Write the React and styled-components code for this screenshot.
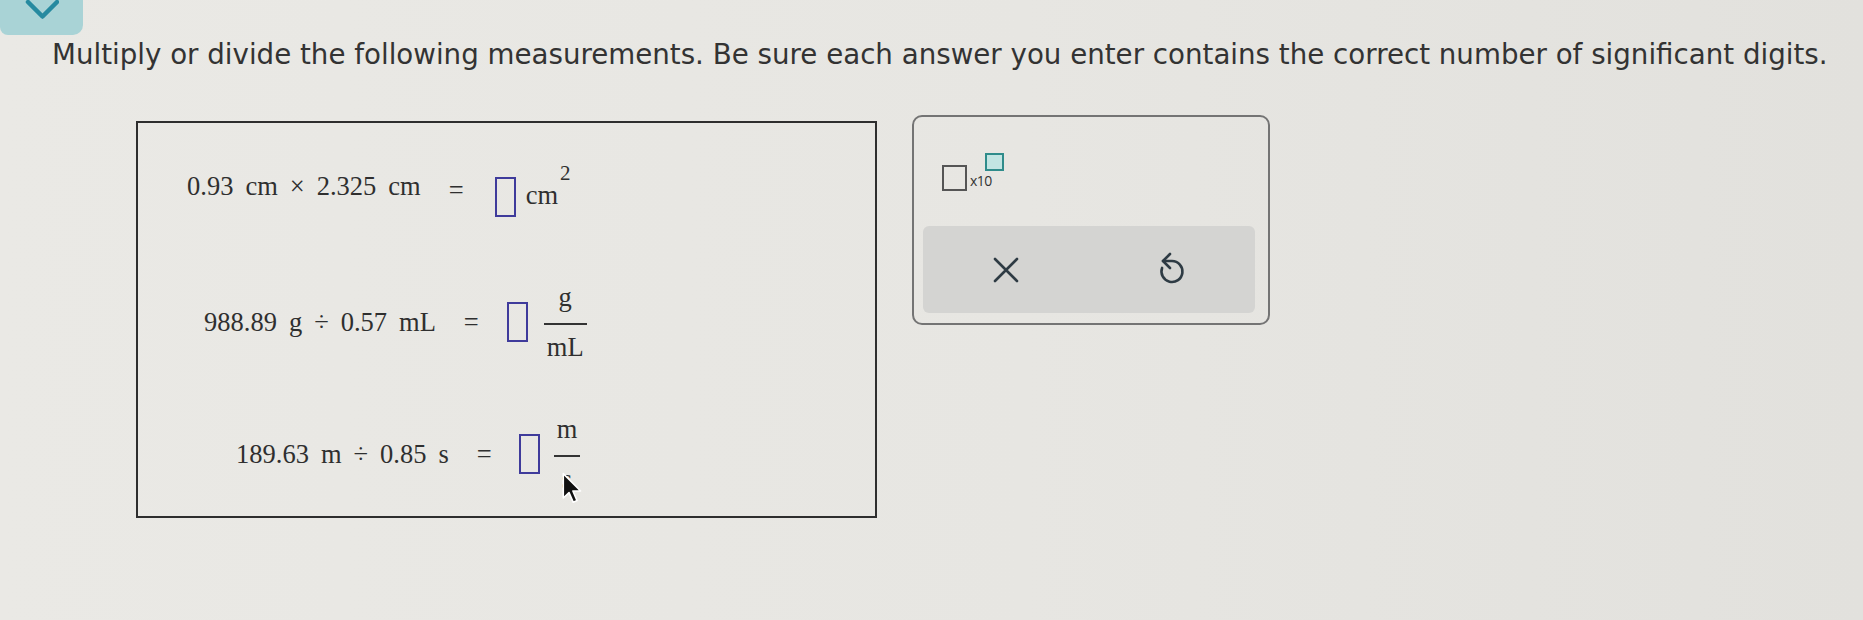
import React from 'react';
import styled, { createGlobalStyle } from 'styled-components';

const GlobalStyle = createGlobalStyle`
  html, body {
    margin:0;
    padding:0;
  }
  body {
    width:1863px;
    height:620px;
    overflow:hidden;
    background:#e7e6e2;
  }
`

const Page = styled.div`
  width:1863px;
  height:620px;
  background:linear-gradient(90deg,#eae9e5 0%,#e7e6e2 55%,#e2e1dd 100%);
  font-family:"DejaVu Sans", "Open Sans", sans-serif;
`
const CollapseTab = styled.div`
  width:83px;
  height:35px;
  background:#a9d3d6;
  border-radius:0 0 10px 8px;
  display:flex;
  justify-content:center;
`
const Prompt = styled.p`
  margin:5px 0 0 52px;
  font-size:27.7px;
  line-height:30px;
  color:#333;
  white-space:nowrap;
`
const Workspace = styled.div`
  display:flex;
  align-items:flex-start;
  margin-top:45px;
`

/* question box with the three measurements */
const QuestionBox = styled.div`
  box-sizing:border-box;
  width:741px;
  height:397px;
  margin:6px 0 0 136px;
  padding-top:37px;
  border:2px solid #2e2e2e;
  display:flex;
  flex-direction:column;
  gap:72px;
  font-family:"Liberation Serif", "Times New Roman", serif;
  font-size:26.5px;
  color:#2f2f2f;
`
const Row = styled.div`
  height:60px;
  display:flex;
  align-items:center;
  padding-left:${p => p.$indent}px;
`
const Expr = styled.div`
  display:flex;
  gap:12px;
  line-height:26px;
  margin-bottom:${p => p.$raise || 0}px;
`
const Equals = styled.span`
  line-height:26px;
  margin:0 ${p => p.$after || 28}px 0 28px;
`
const Answer = styled.div`
  display:flex;
  align-items:${p => p.$bottom ? 'flex-end' : 'center'};
  gap:${p => p.$gap}px;
`
const AnswerBox = styled.span`
  box-sizing:border-box;
  width:21px;
  height:40px;
  border:2px solid #3f3b9b;
`
const Unit = styled.span`
  display:flex;
  align-items:flex-start;
  margin-bottom:9px;
`
const UnitText = styled.span`
  line-height:26px;
  margin-top:19px;
`
const Sup = styled.span`
  font-size:21px;
  line-height:21px;
  margin-left:2px;
`
const Fraction = styled.span`
  position:relative;
  display:inline-flex;
  flex-direction:column;
  align-items:center;
`
const Num = styled.span`
  line-height:26px;
  margin-bottom:13px;
  padding:0 3px;
`
const Bar = styled.span`
  align-self:stretch;
  height:2px;
  background:#333;
`
const Den = styled.span`
  line-height:26px;
  margin-top:9px;
  padding:0 3px;
`
const Pointer = styled.svg`
  position:absolute;
  left:8px;
  top:56px;
`

/* answer tools panel */
const ToolPanel = styled.div`
  box-sizing:border-box;
  width:358px;
  height:210px;
  margin-left:35px;
  padding:36px 13px 10px 9px;
  border:2px solid #747474;
  border-radius:10px;
  display:flex;
  flex-direction:column;
`
const SciWidget = styled.div`
  height:38px;
  margin-left:19px;
  display:flex;
  align-items:flex-end;
`
const BaseBox = styled.span`
  box-sizing:border-box;
  width:25px;
  height:26px;
  border:2px solid #555;
`
const TimesTen = styled.span`
  font-family:"Open Sans", sans-serif;
  font-size:14px;
  line-height:14px;
  color:#333;
  margin:0 0 3px 3px;
  letter-spacing:-0.5px;
`
const ExpBox = styled.span`
  box-sizing:border-box;
  align-self:flex-start;
  width:19px;
  height:18px;
  margin-left:-7px;
  border:2px solid #2f8c8b;
  background:#c2e5e3;
`
const ActionBar = styled.div`
  margin-top:35px;
  height:87px;
  border-radius:6px;
  background:#d4d4d2;
  display:flex;
`
const ActionButton = styled.button`
  flex:1;
  border:none;
  background:transparent;
  padding:0;
  display:flex;
  align-items:center;
  justify-content:center;
`

const Chevron = () => (
  <svg width="34" height="22" viewBox="0 0 34 22">
    <path d="M3 2 L17.5 16.5 L32 2" fill="none" stroke="#268aa0" strokeWidth="4.5" strokeLinecap="round" strokeLinejoin="round" />
  </svg>
)

const CloseIcon = () => (
  <svg width="26" height="26" viewBox="0 0 26 26">
    <path d="M2 2 L24 24 M24 2 L2 24" stroke="#2e3b44" strokeWidth="2.6" strokeLinecap="round" />
  </svg>
)

const UndoIcon = () => (
  <svg width="45" height="45" viewBox="0 0 45 45">
    <path d="M20 7 L13 14 L20 21" fill="none" stroke="#2e3b44" strokeWidth="2.6" strokeLinecap="round" strokeLinejoin="round" />
    <path d="M13 14 H22 A10.5 10.5 0 1 1 12.1 20.9" fill="none" stroke="#2e3b44" strokeWidth="2.6" strokeLinecap="round" />
  </svg>
)

const MousePointer = () => (
  <Pointer width="20" height="32" viewBox="0 0 12.5 19.5">
    <path d="M0.8 0.8 L0.8 16 L4.4 12.6 L7 18.6 L9.4 17.6 L6.8 11.6 L11.6 11.6 Z" fill="#111" stroke="#fff" strokeWidth="1" strokeLinejoin="round" />
  </Pointer>
)

const App = () => (
  <Page>
    <GlobalStyle />
    <CollapseTab><Chevron /></CollapseTab>
    <Prompt>Multiply or divide the following measurements. Be sure each answer you enter contains the correct number of significant digits.</Prompt>
    <Workspace>
      <QuestionBox>
        <Row $indent={49}>
          <Expr $raise={8}>
            <span>0.93</span><span>cm</span><span>×</span><span>2.325</span><span>cm</span>
          </Expr>
          <Equals $after={31}>=</Equals>
          <Answer $bottom $gap={10}>
            <AnswerBox />
            <Unit><UnitText>cm</UnitText><Sup>2</Sup></Unit>
          </Answer>
        </Row>
        <Row $indent={66}>
          <Expr>
            <span>988.89</span><span>g</span><span>÷</span><span>0.57</span><span>mL</span>
          </Expr>
          <Equals>=</Equals>
          <Answer $gap={16}>
            <AnswerBox />
            <Fraction><Num>g</Num><Bar /><Den>mL</Den></Fraction>
          </Answer>
        </Row>
        <Row $indent={98}>
          <Expr>
            <span>189.63</span><span>m</span><span>÷</span><span>0.85</span><span>s</span>
          </Expr>
          <Equals $after={27}>=</Equals>
          <Answer $gap={14}>
            <AnswerBox />
            <Fraction>
              <Num>m</Num><Bar /><Den>s</Den>
              <MousePointer />
            </Fraction>
          </Answer>
        </Row>
      </QuestionBox>
      <ToolPanel>
        <SciWidget>
          <BaseBox />
          <TimesTen>x10</TimesTen>
          <ExpBox />
        </SciWidget>
        <ActionBar>
          <ActionButton><CloseIcon /></ActionButton>
          <ActionButton><UndoIcon /></ActionButton>
        </ActionBar>
      </ToolPanel>
    </Workspace>
  </Page>
)

export default App;
